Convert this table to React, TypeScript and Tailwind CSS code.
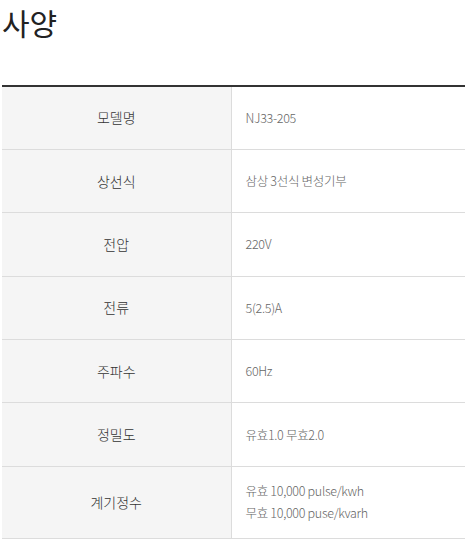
const SPECS: { label: string; value: string[] }[] = [
  { label: "모델명", value: ["NJ33-205"] },
  { label: "상선식", value: ["삼상 3선식 변성기부"] },
  { label: "전압", value: ["220V"] },
  { label: "전류", value: ["5(2.5)A"] },
  { label: "주파수", value: ["60Hz"] },
  { label: "정밀도", value: ["유효1.0 무효2.0"] },
  { label: "계기정수", value: ["유효 10,000 pulse/kwh", "무효 10,000 puse/kvarh"] },
];

export default function App() {
  return (
    <div className="bg-white w-[465px] h-[539px] overflow-hidden font-['Noto_Sans_CJK_KR',sans-serif]">
      <h2 className="pl-[2px] pt-[2px] text-[30px] leading-[40px] text-[#222] font-normal">
        사양
      </h2>
      <table className="ml-[2px] mt-[43px] w-[463px] border-collapse border-t-2 border-[#333]">
        <tbody>
          {SPECS.map((s) => (
            <tr key={s.label} className="border-b border-[#dcdcdc]">
              <th
                className={`w-[229px] bg-[#f5f5f5] border-r border-[#dcdcdc] text-center text-[14px] font-light text-[#333] ${
                  s.value.length > 1 ? "h-[72px]" : "h-[63.4px]"
                }`}
              >
                {s.label}
              </th>
              <td className="pl-[14px] text-[12.5px] font-light text-[#666] leading-[22px] tracking-[-0.3px]">
                {s.value.map((v) => (
                  <div key={v}>{v}</div>
                ))}
              </td>
            </tr>
          ))}
        </tbody>
      </table>
    </div>
  );
}
